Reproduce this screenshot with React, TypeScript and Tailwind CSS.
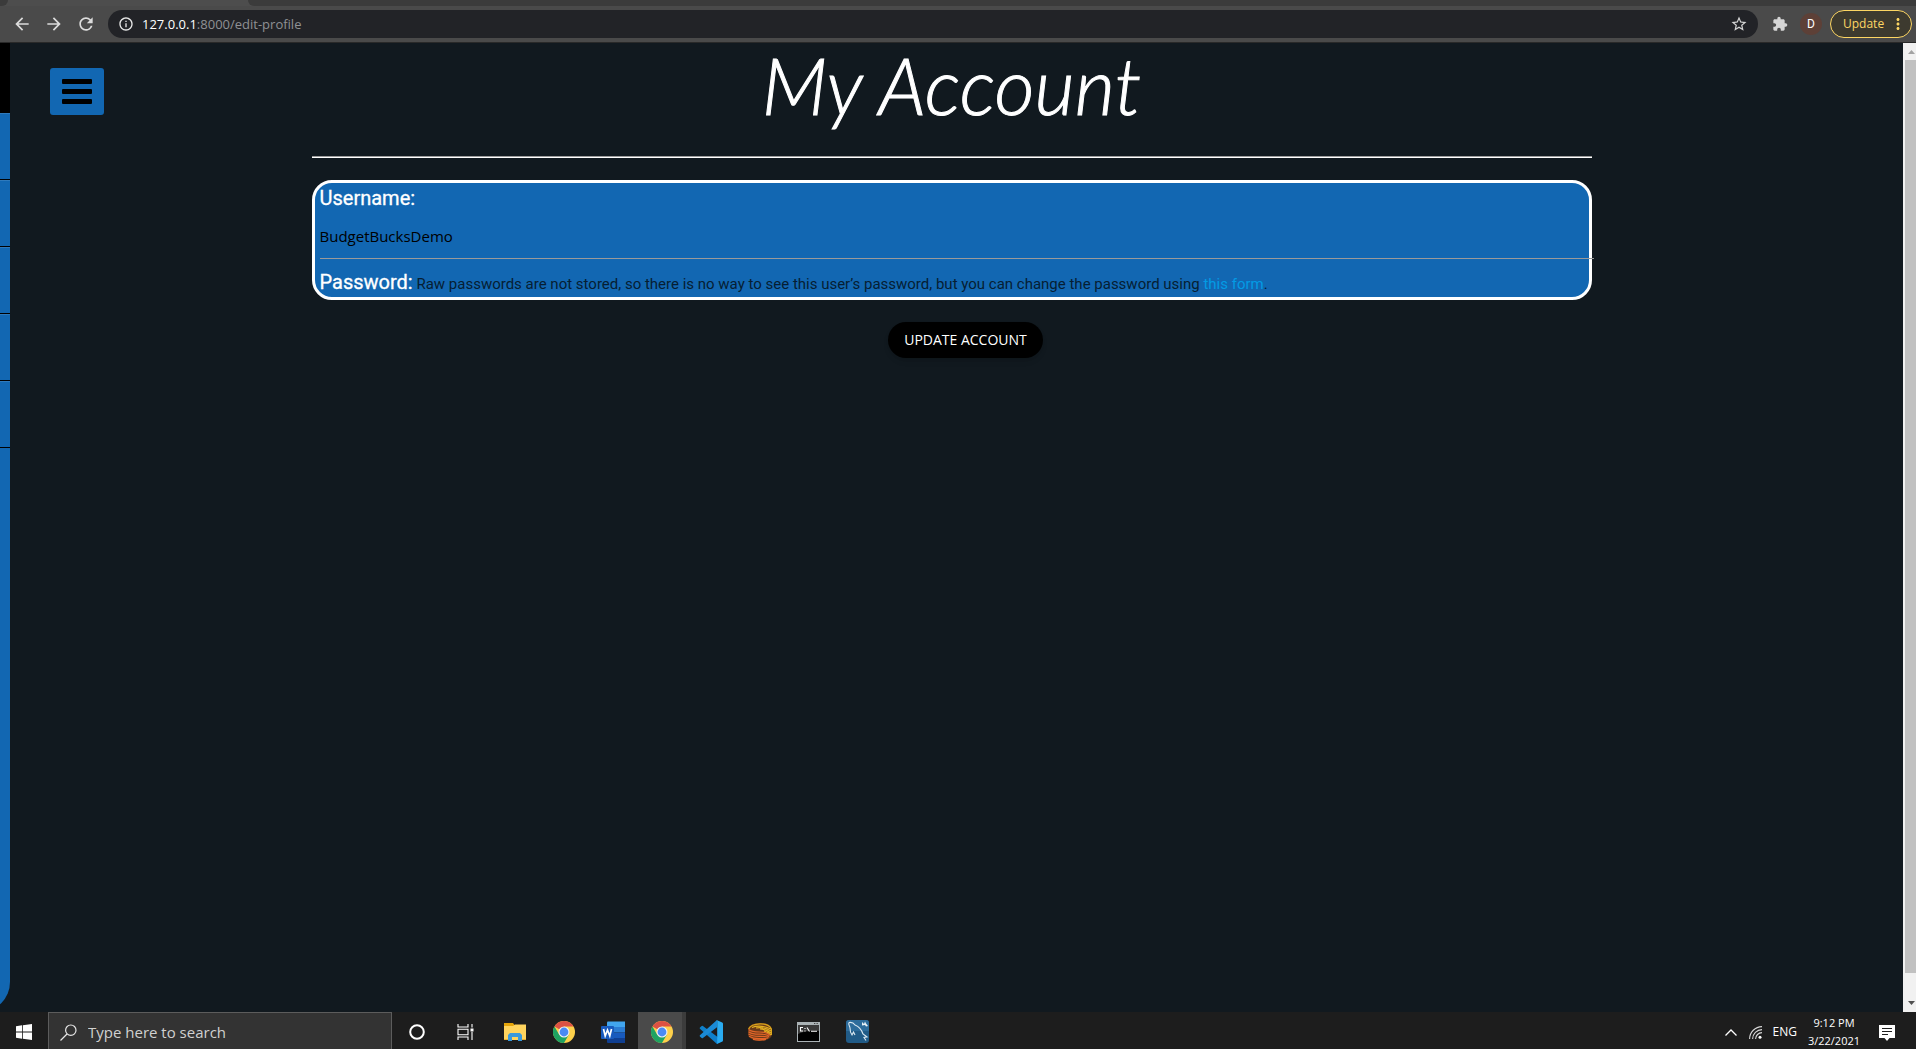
import React from "react";
import {
  MdArrowBack,
  MdArrowForward,
  MdRefresh,
  MdInfoOutline,
  MdStarBorder,
  MdExtension,
  MdMoreVert,
} from "react-icons/md";

const SEGOE = "font-['Open_Sans','Noto_Sans',sans-serif]";
const ROBOTO = "font-['Roboto',sans-serif]";

function BrowserChrome() {
  return (
    <header className={`shrink-0 border-b border-[#292929] bg-[#4a4a4a] ${SEGOE}`}>
      <div className="flex h-1.5 bg-[#4d4d4d]">
        <div className="w-2 rounded-br-lg bg-[#3b3b3b]" />
        <div className="w-60" />
        <div className="grow rounded-bl-lg bg-[#3b3b3b]" />
      </div>
      <div className="flex h-9 items-center pr-1 pl-3">
        <nav className="flex items-center gap-3 text-xl text-[#dcdcdc]">
          <button aria-label="Back"><MdArrowBack /></button>
          <button aria-label="Forward"><MdArrowForward /></button>
          <button aria-label="Reload"><MdRefresh /></button>
        </nav>
        <form className="ml-3 flex h-7 grow items-center rounded-full bg-[#222327] pr-2.5 pl-2.5" onSubmit={(e) => e.preventDefault()}>
          <MdInfoOutline className="size-4 shrink-0 text-[#e8e8e8]" />
          <div className="ml-2 grow text-[13px] leading-5 text-[#8f9194]">
            <a href="#address" className="block"><span className="text-white">127.0.0.1</span>:8000/edit-profile</a>
          </div>
          <button type="button" aria-label="Bookmark this page" className="text-[#d5d5d5]">
            <MdStarBorder className="size-[18px]" />
          </button>
        </form>
        <button aria-label="Extensions" className="ml-3.5 text-[#d5d5d5]"><MdExtension className="size-4" /></button>
        <button className="ml-3 flex size-[22px] items-center justify-center rounded-full bg-[#5d4037] font-['Roboto',sans-serif] text-xs text-white">D</button>
        <button className="ml-2 flex h-7 w-[82px] items-center justify-between rounded-full border border-[#fdd663] bg-[#3d3a2f] pr-1 pl-3 text-xs text-[#fdd663]">
          Update
          <MdMoreVert className="size-[18px]" />
        </button>
      </div>
    </header>
  );
}

function Sidebar() {
  return (
    <aside className="flex w-2.5 shrink-0 justify-end overflow-hidden">
      <div className="flex w-60 shrink-0 flex-col overflow-hidden rounded-br-[30px] bg-[#1267b2]">
        <div className="h-[70px] bg-black" />
        {[0, 1, 2, 3, 4].map((n) => (
          <div key={n} className="h-[67px] border-t border-b border-t-[#2f7abc] border-b-black" />
        ))}
      </div>
    </aside>
  );
}

function Account() {
  return (
    <main className="-ml-2.5 flex grow flex-col">
      <h1 className="-mt-1.5 text-center font-['Lato',cursive] text-[78px] leading-[96px] font-light text-white italic [-webkit-text-stroke:1px_white]">My Account</h1>
      <div className={`mx-auto w-[70%] max-w-[1280px] ${ROBOTO}`}>
        <hr className="mt-[23px] border-t border-b border-t-[#9a9a9a] border-b-white" />
        <section className="mt-[22px] h-[120px] rounded-[20px] border-[3px] border-white bg-[#1267b2] pl-[5px]">
          <h2 className="pt-px text-xl leading-7 text-white [-webkit-text-stroke:0.3px_white]">Username:</h2>
          <p className={`mt-3 text-[15px] leading-6 text-black ${SEGOE}`}>BudgetBucksDemo</p>
          <hr className="-mr-[5px] mt-[10px] border-t border-[#9a9a9a]" />
          <p className="mt-[9px] text-[15px] leading-7 text-[#061e33]">
            <strong className="text-xl font-normal text-white [-webkit-text-stroke:0.3px_white]">Password:</strong>{" "}
            Raw passwords are not stored, so there is no way to see this user’s password, but you can change the password using{" "}
            <a href="#password" className="text-[#039be5]">this form</a>.
          </p>
        </section>
        <div className="mt-[22px] flex justify-center pl-7">
          <button className={`h-9 rounded-full bg-black px-4 text-sm text-white shadow-md ${SEGOE}`}>UPDATE ACCOUNT</button>
        </div>
      </div>
    </main>
  );
}

function Scrollbar() {
  return (
    <div className="flex w-[13px] shrink-0 flex-col overflow-hidden bg-[#f1f1f1]">
      <div className="flex h-[17px] w-[17px] items-center justify-center">
        <svg viewBox="0 0 7 4" className="h-1 w-[7px] fill-[#a3a3a3]"><path d="M0 4 3.5 0 7 4z" /></svg>
      </div>
      <div className="ml-0.5 grow bg-[#c1c1c1]" />
      <div className="flex h-[39px] w-[17px] items-end justify-center pb-[7px]">
        <svg viewBox="0 0 7 4" className="h-1 w-[7px] fill-[#505050]"><path d="M0 0h7L3.5 4z" /></svg>
      </div>
    </div>
  );
}

function ChromeIcon() {
  return (
    <svg viewBox="0 0 22 22" className="size-[22px]">
      <circle cx="11" cy="11" r="11" fill="#fdd04b" />
      <path d="M11 11 1.47 5.5A11 11 0 0 1 20.53 5.5H11z" fill="#dc5144" />
      <path d="M1.47 5.5A11 11 0 0 0 11 22l4.76-8.25L11 11l-4.76 2.75z" fill="#1ea362" />
      <circle cx="11" cy="11" r="5.5" fill="#f1f1f1" />
      <circle cx="11" cy="11" r="4.4" fill="#4a8af4" />
    </svg>
  );
}

function CortanaIcon() {
  return (
    <svg viewBox="0 0 16 16" className="size-4" fill="none" stroke="#fff" strokeWidth="2">
      <circle cx="8" cy="8" r="6.8" />
    </svg>
  );
}

function TaskViewIcon() {
  return (
    <svg viewBox="0 0 17 16" className="h-4 w-[17px]" fill="none" stroke="#fff" strokeWidth="1.1">
      <path d="M1 0v3h10V0M1 16v-3h10v3M1 5.2h10v5.6H1zM15 0v3.5M15 8v8" />
      <path d="M13.5 4.5h3v3h-3z" fill="#fff" stroke="none" />
    </svg>
  );
}

function ExplorerIcon() {
  return (
    <svg viewBox="0 0 22 18" className="h-[18px] w-[22px]">
      <path d="M0 0h9l1.5 2H22v3H0z" fill="#e5a50a" />
      <path d="M0 3h9l2-1.5h11V17H0z" fill="#ffd45e" />
      <path d="M4 18v-6l2-2h10l2 2v6h-4v-4H8v4z" fill="#3a99dc" />
      <path d="M0 16h4v1H0zm18 0h4v1h-4z" fill="#eab12e" />
    </svg>
  );
}

function WordIcon() {
  return (
    <svg viewBox="0 0 24 22" className="h-[22px] w-6">
      <path d="M6 1.5Q6 .5 7 .5h17V6H6z" fill="#41a5ee" />
      <path d="M6 6h18v5.5H6z" fill="#2b7cd3" />
      <path d="M6 11.5h18V17H6z" fill="#185abd" />
      <path d="M6 17h18v5H7q-1 0-1-1z" fill="#103f91" />
      <rect y="5" width="13" height="13" rx="1" fill="#185abd" />
      <path d="m2.500 8 1.700 7L6.500 9l2.300 6 1.700-7" fill="none" stroke="#fff" strokeWidth="1.700" />
    </svg>
  );
}

function CodeIcon() {
  return (
    <svg viewBox="0 0 24 24" className="size-6">
      <path d="M1.200 7.200 2.700 6q.6-.4 1.200 0L24 21l-6 3L.9 8.700q-.7-.8.300-1.500z" fill="#0f7fc9" />
      <path d="M1.200 16.800 2.700 18q.6.4 1.200 0L18 7.300V0L.9 15.300q-.7.800.3 1.500z" fill="#1a8ad6" />
      <path d="m17.500 0 5.700 2.400q.8.400.8 1.300v16.600q0 .9-.8 1.300L17.500 24q.7-.5.700-1.500v-21q0-1-.7-1.500z" fill="#2aabf0" />
    </svg>
  );
}

function CoilIcon() {
  return (
    <svg viewBox="0 0 24 18" className="h-[18px] w-6">
      <path d="M0 6.500Q1 0 12 0t12 6.500V12q-1 5-12 6Q1 17 0 12z" fill="#6b3a18" />
      <g fill="none" strokeWidth="1.200">
        <path d="M.6 6Q3 1 12 .8T23.400 6v6" stroke="#d9a51c" />
        <path d="M4 4.500Q12 1 23 6M8 5q8-1.500 15 3M12 6q6 0 11 4M16 8q4 1 7 4" stroke="#e6b422" />
        <path d="M.6 6.500q3 2.500 11 2.500T22 12.500M.6 8.700q3 2.500 11 2.500T21 13.500M.6 10.900q3 2.500 11 2.500t9 1M1 13.200q4 2.500 10 2.500t9-.7M5 16.300q6 1.500 13 0" stroke="#e2652a" />
      </g>
    </svg>
  );
}

function TerminalIcon() {
  return (
    <svg viewBox="0 0 23 20" className="h-5 w-[23px]">
      <path d="M0 0h23v20H0z" fill="#aab2b5" />
      <path d="M1 3h21v16H1z" fill="#000" />
      <path d="M1 3h21v6Q10 8 1 12z" fill="#3a3a3a" />
      <path d="M17 1h1.300v1H17zm2.500 0h1.300v1h-1.300z" fill="#444" />
      <path d="M6 5.500H3.500v3.500H6M8 6v1m0 1.500v1M10 5.500l2.500 4M14 9.300h6" fill="none" stroke="#fff" strokeWidth="1.100" />
    </svg>
  );
}

function DolphinIcon() {
  return (
    <svg viewBox="0 0 23 23" className="size-[23px]">
      <rect width="23" height="23" rx="3" fill="#215b87" />
      <path d="M0 3q0-3 3-3h17q3 0 3 3v8H0z" fill="#2d6c9b" />
      <g fill="none" stroke="#dce9f2" strokeWidth="1.100">
        <path d="M3 2.500C6 2 8 3.500 9 5c5 2 7 6 8 9l4 3-3 .5 2 3M3 2.500C2 5 4 6 4 8c0 2 .5 5 2 7l1.500-3 1.500 3" />
      </g>
      <path d="m16 2 2 2 1-2.500 1 2L22 6l-2 .5-1-1.500-3 .5z" fill="#e9f1f6" />
    </svg>
  );
}

const apps = [
  { name: "Cortana", Icon: CortanaIcon },
  { name: "Task View", Icon: TaskViewIcon },
  { name: "File Explorer", Icon: ExplorerIcon },
  { name: "Google Chrome", Icon: ChromeIcon },
  { name: "Word", Icon: WordIcon },
  { name: "Google Chrome, edit profile", Icon: ChromeIcon, active: true },
  { name: "Visual Studio Code", Icon: CodeIcon },
  { name: "Coil", Icon: CoilIcon },
  { name: "Command Prompt", Icon: TerminalIcon },
  { name: "MySQL Workbench", Icon: DolphinIcon },
];

function Taskbar() {
  return (
    <footer className={`flex h-[37px] shrink-0 overflow-hidden bg-[#1d1d1d] text-white ${SEGOE}`}>
      <button aria-label="Start" className="flex w-12 shrink-0 items-center justify-center pt-0.5">
        <svg viewBox="0 0 16 16" className="size-4 fill-white">
          <path d="M0 2.200 6 1.300v6.300H0zM6.800 1.200 16 0v7.600H6.800zM0 8.400h6v6.300l-6-.9zM6.800 8.400H16V16l-9.200-1.200z" />
        </svg>
      </button>
      <label className="flex w-[344px] shrink-0 items-center border border-b-0 border-[#5c5c5c] bg-[#333333] pt-0.5 pl-[11px]">
        <svg viewBox="0 0 17 17" className="size-[17px] shrink-0" fill="none" stroke="#e6e6e6" strokeWidth="1.200">
          <circle cx="10.800" cy="6.200" r="5.200" />
          <path d="M7 10 .5 16.500" />
        </svg>
        <input aria-label="Search" placeholder="Type here to search" className="ml-[11px] min-w-0 grow bg-transparent text-[15px] outline-none placeholder:text-[#d0d0d0]" />
      </label>
      <div className="flex">
        {apps.map(({ name, Icon, active }) => (
          <button
            key={name}
            aria-label={name}
            className={active ? "flex w-[49px] items-center justify-center border-r-4 border-l border-l-[#1d1d1d] border-r-[#3c3c3c] bg-[#4a4a4a] pt-0.5 pl-1" : "flex w-[49px] items-center justify-center pt-0.5"}
          >
            <Icon />
          </button>
        ))}
      </div>
      <div className="ml-auto flex items-center pr-[21px]">
        <button aria-label="Show hidden icons" className="pt-1">
          <svg viewBox="0 0 12 7" className="h-[7px] w-3" fill="none" stroke="#fff" strokeWidth="1.300"><path d="m.5 6.500 5.500-5.500 5.500 5.500" /></svg>
        </button>
        <button aria-label="Network" className="ml-3 pt-1">
          <svg viewBox="0 0 13 13" className="size-[13px]" fill="none" stroke="#d8d8d8" strokeWidth="1.100">
            <path d="M.6 13A12.500 12.500 0 0 1 13 .6M3.600 13A9.500 9.500 0 0 1 13 3.600M6.600 13A6.500 6.500 0 0 1 13 6.600" />
            <circle cx="11" cy="11.200" r="1.500" fill="#fff" stroke="none" />
          </svg>
        </button>
        <button className="ml-[11px] pt-0.5 text-xs">ENG</button>
        <time className="ml-2.5 mt-0.5 w-[54px] text-center text-[11px] leading-[18px] whitespace-nowrap">
          9:12 PM
          <br />
          3/22/2021
        </time>
        <button aria-label="Notifications" className="ml-[18px] pt-1">
          <svg viewBox="0 0 16 16" className="size-4">
            <path d="M0 0h16v13h-5.500L8 16l-2.500-3H0z" fill="#fff" />
            <path d="M3 3.500h10M3 6.500h10M3 9.500h6" stroke="#1d1d1d" strokeWidth="1.200" />
          </svg>
        </button>
      </div>
    </footer>
  );
}

export default function App() {
  return (
    <div className="flex h-screen flex-col overflow-hidden bg-[#11191f]">
      <BrowserChrome />
      <div className="flex min-h-0 grow">
        <Sidebar />
        <div className="relative flex grow">
          <button aria-label="Open menu" className="absolute top-[25px] left-10 flex h-[47px] w-[54px] items-center justify-center rounded-[3px] bg-[#1267b2]">
            <svg viewBox="0 0 30 25" className="h-[25px] w-[30px]">
              <rect width="30" height="5" rx="1" />
              <rect y="10" width="30" height="5" rx="1" />
              <rect y="20" width="30" height="5" rx="1" />
            </svg>
          </button>
          <Account />
        </div>
        <Scrollbar />
      </div>
      <Taskbar />
    </div>
  );
}
